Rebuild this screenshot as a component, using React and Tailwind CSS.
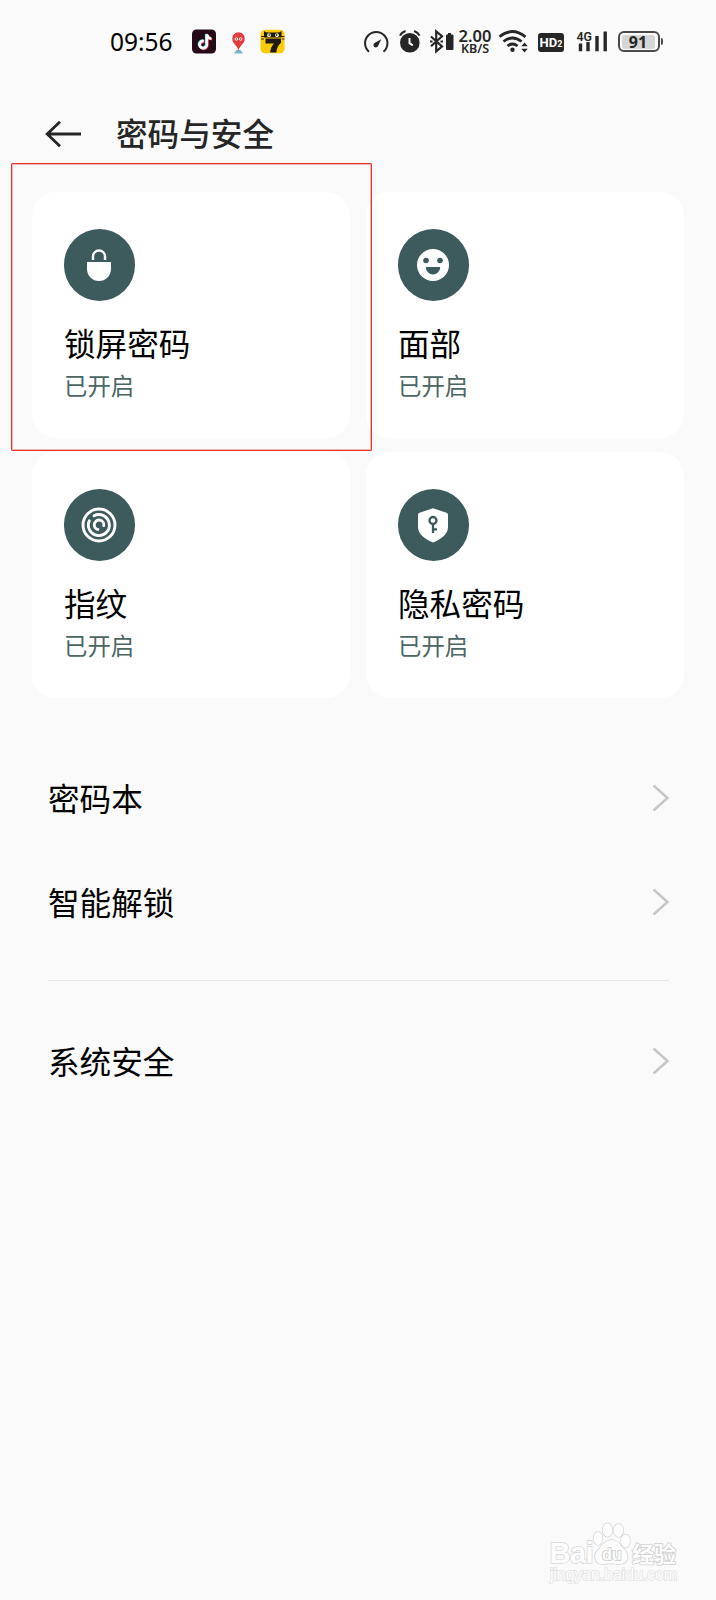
const methods = [
  { id: 'lock', title: '锁屏密码', status: '已开启', icon: LockIcon, highlighted: true },
  { id: 'face', title: '面部', status: '已开启', icon: FaceIcon },
  { id: 'finger', title: '指纹', status: '已开启', icon: FingerprintIcon },
  { id: 'private', title: '隐私密码', status: '已开启', icon: ShieldKeyIcon },
];

export default function App() {
  return (
    <div className="relative h-[1600px] w-[716px] overflow-hidden bg-[#fafafa] font-['Noto_Sans_CJK_SC',sans-serif] text-black">
      <StatusBar />

      <header className="mt-[42px] flex h-[50px] items-center pt-px pl-[45px]">
        <svg className="h-7 w-9 shrink-0" viewBox="0 0 36 28" fill="none" stroke="#262626" strokeWidth="2.8">
          <path d="M15 1.700 2.200 14 15 26.300M2.200 14H36" />
        </svg>
        <h1 className="ml-[35px] pb-[3px] text-[31.6px] leading-[46px] font-medium text-[#262626]">密码与安全</h1>
      </header>

      <main className="pt-[34px]">
        <div className="grid grid-cols-[318px_318px] gap-x-4 gap-y-[14px] pl-8">
          {methods.map((m) => (
            <MethodCard key={m.id} {...m} />
          ))}
        </div>

        <div className="mt-[48px] pr-[47px] pl-12">
          <ListRow label="密码本" />
          <ListRow label="智能解锁" />
          <div className="mt-[26px] mb-[28px] h-px bg-[#e6e6e6]" />
          <ListRow label="系统安全" />
        </div>
      </main>

      <Watermark />
    </div>
  );
}

function MethodCard({ title, status, icon: Icon, highlighted }) {
  return (
    <section className="relative h-[246px] rounded-[24px] bg-white pt-[37px] pl-[31.5px]">
      <div className="flex h-[72px] w-[71.5px] items-center justify-center rounded-full bg-[#3d5a5c]">
        <Icon />
      </div>
      <h2 className="mt-[18px] ml-[0.5px] text-[31.6px] leading-[46px]">{title}</h2>
      <p className="mt-[3px] ml-[0.5px] text-[23.4px] leading-[34px] text-[#4b6664]">{status}</p>
      {highlighted && (
        <div className="pointer-events-none absolute -top-[29px] -left-[21px] z-10 h-[288px] w-[361px] rounded-[1px] border border-[#e5342c] outline-1 -outline-offset-2 outline-[#e5342c]/35" />
      )}
    </section>
  );
}

function ListRow({ label }) {
  return (
    <div className="flex h-[104px] items-center justify-between">
      <span className="pb-[3px] text-[31.6px] leading-[46px]">{label}</span>
      <svg className="mr-[-1px] h-7 w-[18px]" viewBox="0 0 18 28" fill="none" stroke="#c6c6c6" strokeWidth="2.5">
        <path d="M1.500 1.500 15.500 14 1.500 26.500" />
      </svg>
    </div>
  );
}

function LockIcon() {
  return (
    <svg className="h-9 w-9" viewBox="0 0 36 36">
      <path d="M12 13V9.500a6 6 0 0 1 12 0V13" fill="none" stroke="#fff" strokeWidth="2.4" />
      <path d="M6 15h24v7a12 12 0 0 1-24 0z" fill="#fff" />
    </svg>
  );
}

function FaceIcon() {
  return (
    <svg className="h-9 w-9" viewBox="0 0 36 36">
      <circle cx="18" cy="18" r="16" fill="#fff" />
      <circle cx="11" cy="13.500" r="2.800" fill="#3d5a5c" />
      <circle cx="25" cy="13.500" r="2.800" fill="#3d5a5c" />
      <path d="M10.800 20h14.400a7.200 7.500 0 0 1-14.400 0z" fill="#3d5a5c" />
    </svg>
  );
}

function FingerprintIcon() {
  return (
    <svg className="h-9 w-9" viewBox="0 0 36 36" fill="none" stroke="#fff" strokeWidth="2.900" strokeLinecap="round">
      <circle cx="18" cy="18" r="16" />
      <path d="M13 8.800A10.500 10.500 0 1 1 8.300 13.800" />
      <path d="M17 22.500A4.800 4.800 0 1 1 22.800 18.500" />
    </svg>
  );
}

function ShieldKeyIcon() {
  return (
    <svg className="h-9 w-9" viewBox="0 0 36 36">
      <path d="M18 1.200 31.500 5.800q1.500.6 1.500 2V20c0 7.500-7 12-15 15.500C10 32 3 27.500 3 20V7.800q0-1.400 1.500-2z" fill="#fff" />
      <g fill="none" stroke="#3d5a5c" strokeWidth="2.300">
        <circle cx="18" cy="13.500" r="3.500" />
        <path d="M18 17v9M18 22.300h4" />
      </g>
    </svg>
  );
}

function StatusBar() {
  return (
    <div className="flex h-[66px] items-start pt-[28px] pl-[110px] text-[#262626]">
      <span className="mt-[1.5px] w-[64px] font-['Noto_Sans',sans-serif] text-[24.5px] leading-6 text-black">09:56</span>

      <svg className="ml-[17px] h-7 w-[96px] shrink-0" viewBox="191 28 96 28">
        <rect x="192" y="29.500" width="24" height="24" rx="4.500" fill="#260a18" />
        <g fill="none" strokeWidth="2.600">
          <path d="M203.200 40.500a3.600 3.600 0 1 0 3 3.600V34c.7 2.700 2.300 4 4.600 4.200" stroke="#4de8e4" />
          <path d="M204.500 41.700a3.600 3.600 0 1 0 3 3.600V35c.7 2.700 2.300 4 4.600 4.200" stroke="#f5315c" />
          <path d="M203.800 41.100a3.600 3.600 0 1 0 3 3.600V34.500c.7 2.700 2.300 4 4.600 4.200" stroke="#fff" />
        </g>
        <path d="m234 53.500 2.500-3.500h4l2.500 3.500z" fill="#74b2c8" />
        <path d="M238.500 51c-.8-5.500-6.200-7-6.200-12.500a6.200 6.200 0 0 1 12.400 0c0 5.500-5.400 7-6.200 12.500z" fill="#e23b3b" />
        <circle cx="236.400" cy="39" r="1.300" fill="none" stroke="#fff" strokeWidth=".9" />
        <circle cx="240.600" cy="39" r="1.300" fill="none" stroke="#fff" strokeWidth=".9" />
        <rect x="260.500" y="29.800" width="24" height="23.500" rx="4.500" fill="#fbcb08" />
        <path d="M264 31q2.500 2 4.500 1.500h9q1.500.5 4-1.500v6.500H264z" fill="#1c1a12" />
        <path d="M265.500 38.500H281v4.300q-4.300 3.500-4.600 9.800h-6.200q.3-5.300 3.800-9h-8.500z" fill="#1c1a12" />
        <path d="M261 36.500h4M281 36.500h3.500M261 39h3M282 39h2.500" stroke="#1c1a12" strokeWidth=".9" />
        <circle cx="269" cy="35.200" r="1.900" fill="#fff3ba" />
        <circle cx="277" cy="35.200" r="1.900" fill="#fff3ba" />
        <circle cx="269.300" cy="35" r=".8" />
        <circle cx="276.700" cy="35" r=".8" />
      </svg>

      {/* speed, alarm, bluetooth */}
      <svg className="ml-[76px] h-7 w-[92px] shrink-0" viewBox="363 28 92 28">
        <path d="M369 51.700a11.200 11.200 0 1 1 14.500 0" fill="none" stroke="#262626" strokeWidth="2" />
        <path d="m381.200 39.300-2.800 6a2.500 2.500 0 1 1-3-2.800z" fill="#262626" />
        <circle cx="409.800" cy="42.700" r="9.800" fill="#262626" />
        <path d="M400 35.600q1.500-3.200 5.500-4.600M419.600 35.600q-1.500-3.200-5.500-4.600" fill="none" stroke="#262626" strokeWidth="2" />
        <path d="M409.500 38v5.200l3.300 2.200" fill="none" stroke="#fafafa" strokeWidth="2" />
        <path d="m431 36.500 11 10-5.800 4.800v-20l5.800 4.900-11 10" fill="none" stroke="#262626" strokeWidth="2.200" />
        <path d="M430 41.500h2.500M440.500 41.500h2.500" stroke="#262626" strokeWidth="2" />
        <path d="M448 33h3v1.500h1.500q1 0 1 1V49q0 1-1 1h-5.500q-1 0-1-1V35.500q0-1 1-1h1z" fill="#262626" />
      </svg>

      <div className="ml-[2px] flex w-[36px] flex-col items-center font-['Noto_Sans',sans-serif] font-semibold whitespace-nowrap">
        <span className="text-[16.5px] leading-[15px]">2.00</span>
        <span className="text-[12.5px] leading-[12px]">KB/S</span>
      </div>

      <svg className="ml-[5px] h-7 w-[31px] shrink-0" viewBox="498 28 31 28">
        <g fill="none" stroke="#262626" strokeWidth="2.800">
          <path d="M499.500 36.800q12.500-10.500 26 0" />
          <path d="M503.500 41.500q9-7 18 0" />
          <path d="M507.500 46q5-4 10 0" />
        </g>
        <circle cx="512.500" cy="49.800" r="2.200" fill="#262626" />
        <path d="m524.500 42.500 3.200 3.800h-6.400zM524.500 52.500l3.200-3.800h-6.400z" fill="#262626" />
      </svg>

      <div className="mt-[4.5px] ml-[9px] flex h-[19px] w-[26px] items-center justify-center rounded-[3px] bg-[#262626] font-['Roboto',sans-serif] font-bold text-white">
        <span className="text-[13px] leading-none">HD</span>
        <span className="mt-[4px] text-[9px] leading-none">2</span>
      </div>

      <svg className="ml-[12px] h-7 w-[33px] shrink-0" viewBox="576 28 33 28">
        <path d="M580.500 43.500v7.800M588 42v9.300M597 36v15.300M605.200 31.500v19.800" stroke="#262626" strokeWidth="3.400" />
        <text x="576.500" y="40.500" fontFamily="Roboto" fontSize="13.500" fontWeight="600" fill="#262626" stroke="#fafafa" strokeWidth="1.500" paintOrder="stroke" textLength="15.500" lengthAdjust="spacingAndGlyphs">4G</text>
      </svg>

      <div className="mt-[3px] ml-[9px] flex items-center">
        <div className="flex h-[21px] w-[42px] rounded-[6px] border-2 border-[#4a4a4a] p-[1.5px]">
          <div className="flex w-[33px] items-center justify-center rounded-[3px] bg-[#d6d6d6] font-['Noto_Sans',sans-serif] text-[16px] leading-none font-bold">
            91
          </div>
        </div>
        <div className="ml-px h-[7px] w-[2px] rounded-r bg-[#4a4a4a]" />
      </div>
    </div>
  );
}

function Watermark() {
  return (
    <svg className="absolute right-[32px] bottom-[10px] h-[70px] w-[136px]" viewBox="548 1520 136 70" fill="#fdfdfd" stroke="#d6d6d6" strokeWidth="1.500" paintOrder="stroke">
      <text x="549.500" y="1563" fontFamily="Liberation Sans" fontWeight="700" fontSize="29" textLength="44">Bai</text>
      <ellipse cx="598" cy="1538.500" rx="4.500" ry="6.500" />
      <ellipse cx="607.500" cy="1530" rx="4.800" ry="6.800" />
      <ellipse cx="618.500" cy="1530.500" rx="4.800" ry="6.500" />
      <ellipse cx="625.500" cy="1541" rx="4.500" ry="6.500" />
      <path d="M612 1540c6 0 8 5 12 9 5 5 5 15-4 15-4 0-12-1-16 0-10 1-11-9-6-14 4-4 7-10 14-10z" />
      <text x="602" y="1560" fontFamily="Liberation Sans" fontWeight="700" fontSize="16" stroke="#c8c8c8">du</text>
      <text x="632" y="1561.500" fontFamily="Noto Sans CJK SC" fontWeight="700" fontSize="22" stroke="#cdcdcd">经验</text>
      <text x="550" y="1580" fontFamily="Liberation Sans" fontSize="16" textLength="127" stroke="#e2e2e2">jingyan.baidu.com</text>
    </svg>
  );
}
